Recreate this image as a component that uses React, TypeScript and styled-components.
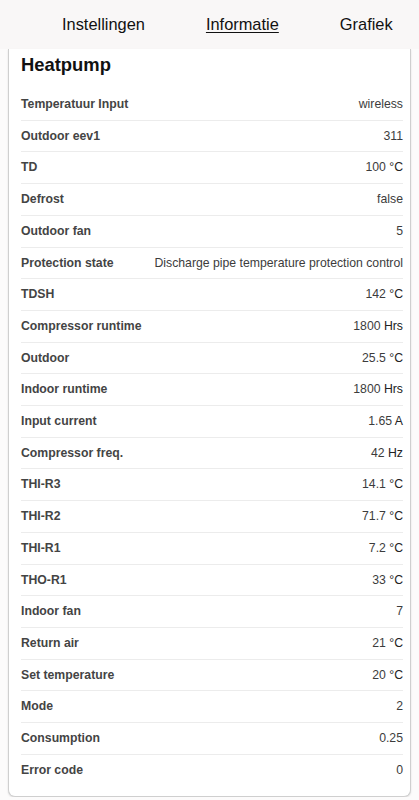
import React from "react";
import styled, { createGlobalStyle } from "styled-components";

const Global = createGlobalStyle`
  html, body { margin: 0; padding: 0; }
  body {
    background: #fcfbfb;
    font-family: "Liberation Sans", Arial, sans-serif;
    color: #222;
  }
`;

const Header = styled.nav`
  height: 49px;
  background: #f9f7f7;
  display: flex;
  align-items: center;
  gap: 61px;
  padding-left: 62px;
  box-sizing: border-box;
`;

const Tab = styled.a<{ $active?: boolean }>`
  font-size: 16.4px;
  color: #111;
  text-decoration: ${(p) => (p.$active ? "underline" : "none")};
  text-underline-offset: 2px;
  cursor: pointer;
`;

const Card = styled.section`
  margin: 0 8px;
  background: #fff;
  border: 1px solid #cfcfcf;
  border-top: none;
  border-radius: 0 0 7px 7px;
  box-shadow: 0 1px 2px rgba(0, 0, 0, 0.12);
  padding: 5px 7px 11px 12px;
`;

const Title = styled.h3`
  margin: 0 0 14px;
  font-size: 18.4px;
  line-height: 21px;
  font-weight: bold;
  color: #111;
`;

const Row = styled.div<{ $last?: boolean }>`
  display: flex;
  justify-content: space-between;
  align-items: center;
  padding: 8px 0;
  line-height: 14.7px;
  font-size: 12.25px;
  border-bottom: ${(p) => (p.$last ? "none" : "1px solid #ececec")};
`;

const Label = styled.span`
  font-weight: bold;
  color: #444;
`;

const Value = styled.span`
  color: #3c3c3c;
`;

const Unit = styled.span`
  color: #222;
`;

const rows: [string, string, string?][] = [
  ["Temperatuur Input", "wireless"],
  ["Outdoor eev1", "311"],
  ["TD", "100", "°C"],
  ["Defrost", "false"],
  ["Outdoor fan", "5"],
  ["Protection state", "Discharge pipe temperature protection control"],
  ["TDSH", "142", "°C"],
  ["Compressor runtime", "1800", "Hrs"],
  ["Outdoor", "25.5", "°C"],
  ["Indoor runtime", "1800", "Hrs"],
  ["Input current", "1.65", "A"],
  ["Compressor freq.", "42", "Hz"],
  ["THI-R3", "14.1", "°C"],
  ["THI-R2", "71.7", "°C"],
  ["THI-R1", "7.2", "°C"],
  ["THO-R1", "33", "°C"],
  ["Indoor fan", "7"],
  ["Return air", "21", "°C"],
  ["Set temperature", "20", "°C"],
  ["Mode", "2"],
  ["Consumption", "0.25"],
  ["Error code", "0"],
];

export default function App() {
  return (
    <>
      <Global />
      <Header>
        <Tab>Instellingen</Tab>
        <Tab $active>Informatie</Tab>
        <Tab>Grafiek</Tab>
      </Header>
      <Card>
        <Title>Heatpump</Title>
        {rows.map(([label, value, unit], i) => (
          <Row key={label} $last={i === rows.length - 1}>
            <Label>{label}</Label>
            <Value>
              {value}
              {unit ? <Unit> {unit}</Unit> : null}
            </Value>
          </Row>
        ))}
      </Card>
    </>
  );
}
